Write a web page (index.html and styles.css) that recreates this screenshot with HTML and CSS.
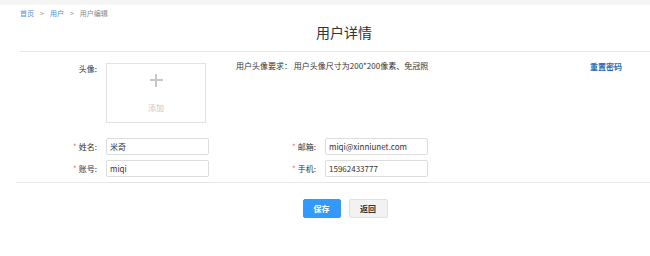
FILE: index.html
```html
<!DOCTYPE html>
<html lang="zh-CN">
<head>
    <meta charset="UTF-8">
    <title>用户编辑</title>
    <link rel="stylesheet" href="styles.css">
</head>
<body>
    <div class="topbar"></div>
    <nav class="crumbs">
        <a href="#">首页</a><span class="sep">&gt;</span><a href="#">用户</a><span class="sep">&gt;</span><span class="current">用户编辑</span>
    </nav>

    <div class="panel">
        <h1 class="title">用户详情</h1>

        <div class="form">
            <div class="row avatar-row">
                <label class="label">头像:</label>
                <div class="avatar-box">
                    <span class="plus"></span>
                    <span class="add-text">添加</span>
                </div>
                <p class="hint">用户头像要求：&nbsp;用户头像尺寸为200*200像素、免冠照</p>
                <a href="#" class="reset">重置密码</a>
            </div>

            <div class="row">
                <label class="label"><i class="req">*</i>姓名:</label>
                <input class="field" type="text" value="米奇">
                <label class="label second"><i class="req">*</i>邮箱:</label>
                <input class="field" type="text" value="miqi@xinniunet.com">
            </div>
            <div class="row">
                <label class="label"><i class="req">*</i>账号:</label>
                <input class="field" type="text" value="miqi">
                <label class="label second"><i class="req">*</i>手机:</label>
                <input class="field" type="text" value="15962433777">
            </div>
        </div>
    </div>

    <div class="actions">
        <button class="btn btn-primary">保存</button>
        <button class="btn btn-default">返回</button>
    </div>
</body>
</html>
```

FILE: styles.css
```css
/* Base */
body {
    margin: 0;
    font-family: "Noto Sans CJK SC", "Noto Sans", sans-serif;
    font-size: 8px;
    color: #333;
    background: #fff;
}

.topbar {
    height: 5px;
    background: #f5f5f5;
}

/* Breadcrumb */
.crumbs {
    padding-left: 20px;
    height: 16px;
    line-height: 16px;
    font-size: 7px;
    color: #888;
}

.crumbs a {
    color: #4a90e2;
    text-decoration: none;
}

.crumbs .sep {
    margin: 0 6px;
    color: #999;
}

/* Panel */
.panel {
    margin-left: 20px;
}

.title {
    margin: 0;
    padding-left: 18px;
    height: 30px;
    line-height: 22px;
    text-align: center;
    font-size: 14px;
    font-weight: normal;
    color: #333;
    border-bottom: 1px solid #e6e6e6;
}

.form {
    padding-top: 11px;
}

.row {
    display: flex;
    align-items: center;
    margin-bottom: 5px;
}

.label {
    width: 77px;
    margin-right: 9px;
    text-align: right;
    color: #333;
    font-size: 8px;
}

.label.second {
    margin-left: 30px;
}

.req {
    font-style: normal;
    color: #f56c6c;
    margin-right: 2px;
}

.field {
    width: 103px;
    height: 17px;
    box-sizing: border-box;
    padding: 0 3px;
    border: 1px solid #ddd;
    border-radius: 2px;
    font-family: inherit;
    font-size: 8px;
    color: #333;
    outline: none;
}

/* Avatar row */
.avatar-row {
    align-items: flex-start;
    margin-bottom: 15px;
}

.avatar-row .label {
    margin-top: 0;
}

.avatar-box {
    width: 100px;
    height: 60px;
    box-sizing: border-box;
    border: 1px solid #e3e3e3;
    display: flex;
    flex-direction: column;
    align-items: center;
}

.plus {
    position: relative;
    width: 13px;
    height: 13px;
    margin-top: 10px;
}

.plus::before,
.plus::after {
    content: "";
    position: absolute;
    background: #c8c8c8;
}

.plus::before {
    left: 0;
    top: 5px;
    width: 13px;
    height: 2px;
}

.plus::after {
    left: 5px;
    top: 0;
    width: 2px;
    height: 13px;
}

.add-text {
    margin-top: 15px;
    font-size: 8px;
    color: #c8c8c8;
}

.hint {
    margin: -3px 0 0 30px;
    font-size: 8px;
    color: #333;
}

.reset {
    margin-left: auto;
    margin-right: 28px;
    margin-top: -2px;
    color: #2b6cb0;
    font-weight: bold;
    text-decoration: none;
    font-size: 8px;
}

/* Actions */
.actions {
    margin-left: 16px;
    border-top: 1px solid #e6e6e6;
    padding-top: 16px;
    padding-left: 24px;
    display: flex;
    justify-content: center;
    gap: 8px;
}

.btn {
    height: 19px;
    width: 38px;
    padding: 0;
    border-radius: 2px;
    font-family: inherit;
    font-size: 8px;
    font-weight: bold;
    cursor: pointer;
}

.btn-primary {
    background: #3399ff;
    border: 1px solid #3399ff;
    color: #fff;
}

.btn-default {
    width: 39px;
    background: #f2f2f2;
    border: 1px solid #e0e0e0;
    color: #333;
}
```
